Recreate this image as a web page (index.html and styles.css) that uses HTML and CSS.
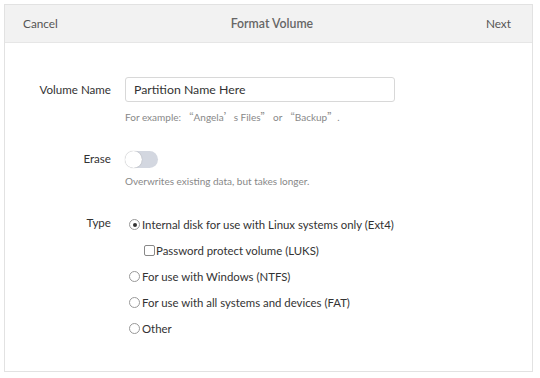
FILE: index.html
```html
<!DOCTYPE html>
<html lang="en">
<head>
  <meta charset="UTF-8">
  <title>Format Volume</title>
  <link rel="stylesheet" href="styles.css">
</head>
<body>

<div class="dialog">
  <div class="header">
    <span class="header-btn">Cancel</span>
    <span class="header-title">Format Volume</span>
    <span class="header-btn">Next</span>
  </div>

  <div class="content">
    <div class="row row-name">
      <label class="label">Volume Name</label>
      <div class="field">
        <input type="text" class="text-input" value="Partition Name Here">
        <small class="hint">For example: <span class="q">“</span>Angela<span class="q">’</span>s Files<span class="q">”</span> or <span class="q">“</span>Backup<span class="q">”</span>.</small>
      </div>
    </div>

    <div class="row row-erase">
      <label class="label">Erase</label>
      <div class="field">
        <span class="switch"><span class="knob"></span></span>
        <small class="hint">Overwrites existing data, but takes longer.</small>
      </div>
    </div>

    <div class="row row-type">
      <label class="label">Type</label>
      <div class="field options">
        <div class="option"><span class="radio checked"></span>Internal disk for use with Linux systems only (Ext4)</div>
        <div class="option sub"><span class="check"></span>Password protect volume (LUKS)</div>
        <div class="option"><span class="radio"></span>For use with Windows (NTFS)</div>
        <div class="option"><span class="radio"></span>For use with all systems and devices (FAT)</div>
        <div class="option"><span class="radio"></span>Other</div>
      </div>
    </div>
  </div>
</div>

</body>
</html>
```

FILE: styles.css
```css
body {
  margin: 0;
  background: #fff;
  font-family: 'Lato', 'Noto Sans', sans-serif;
  color: #333;
}

.dialog {
  margin: 4px 7px 0 4px;
  height: 368px;
  border: 1px solid #e2e2e2;
  background: #fff;
  box-sizing: border-box;
}

.header {
  height: 37px;
  background: #f2f2f2;
  border-bottom: 1px solid #e6e6e6;
  display: flex;
  align-items: center;
  justify-content: space-between;
  padding: 0 21px 0 18px;
  font-size: 11.8px;
  color: #555;
}

.header-title {
  font-weight: 600;
  font-size: 12.3px;
  color: #666;
}

.content {
  padding-top: 34px;
}

.row {
  display: grid;
  grid-template-columns: 106px 1fr;
  column-gap: 14px;
}

.label {
  text-align: right;
  font-size: 11.6px;
  color: #333;
}

.row-name .label {
  padding-top: 6px;
}

.field {
  display: flex;
  flex-direction: column;
  align-items: flex-start;
}

.text-input {
  width: 270px;
  height: 25px;
  box-sizing: border-box;
  border: 1px solid #d8d8d8;
  border-radius: 3px;
  padding: 0 8px;
  font-family: inherit;
  font-size: 12.3px;
  color: #333;
}

.hint {
  font-size: 10px;
  color: #888;
  margin-top: 7px;
}

.q {
  font-family: 'Noto Sans CJK SC', sans-serif;
}

.row-erase {
  margin-top: 27px;
}

.row-erase .label {
  padding-top: 1px;
}

.switch {
  width: 33px;
  height: 17px;
  border-radius: 9px;
  background: #d3d7e0;
  position: relative;
}

.knob {
  position: absolute;
  left: 0;
  top: 0;
  width: 17px;
  height: 17px;
  border-radius: 50%;
  background: #fff;
  box-shadow: 0 0 1px rgba(0,0,0,0.35);
}

.row-erase .hint {
  margin-top: 7px;
}

.row-type {
  margin-top: 29px;
}

.options {
  gap: 9px;
}

.option {
  display: flex;
  align-items: center;
  font-size: 11.4px;
  color: #333;
  height: 17px;
}

.radio {
  width: 11px;
  height: 11px;
  border: 1px solid #999;
  border-radius: 50%;
  margin: 0 2px 0 4px;
  position: relative;
  box-sizing: border-box;
}

.radio.checked::after {
  content: "";
  position: absolute;
  left: 2.5px;
  top: 2.5px;
  width: 4px;
  height: 4px;
  border-radius: 50%;
  background: #333;
}

.option.sub {
  padding-left: 19px;
}

.check {
  width: 11px;
  height: 11px;
  border: 1px solid #888;
  border-radius: 2px;
  box-sizing: border-box;
  margin-right: 1px;
}
```
